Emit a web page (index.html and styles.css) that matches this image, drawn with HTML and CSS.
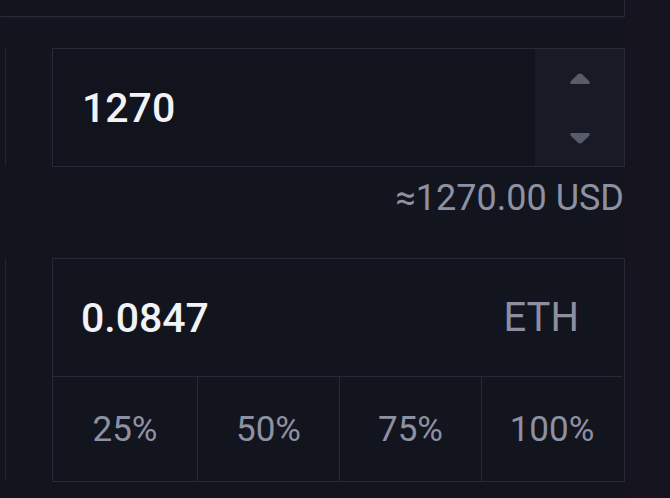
FILE: index.html
```html
<!DOCTYPE html>
<html>
<head>
<meta charset="utf-8">
<link rel="stylesheet" href="styles.css">
</head>
<body>
<div class="page">
  <div class="main">
    <div class="top-box"></div>
    <div class="rows">
      <div class="row">
        <div class="side-box side-1"></div>
        <div class="field price">
          <div class="value">1270</div>
          <div class="stepper">
            <svg class="arrow" width="20" height="12" viewBox="0 0 20 12"><path d="M8 1.2 Q10 -0.4 12 1.2 L19.5 8.5 L19.5 11 L0.5 11 L0.5 8.5 Z" fill="#585b69"/></svg>
            <svg class="arrow" width="20" height="12" viewBox="0 0 20 12"><path d="M0.5 1 L19.5 1 L19.5 3.5 L12 10.8 Q10 12.4 8 10.8 L0.5 3.5 Z" fill="#585b69"/></svg>
          </div>
        </div>
      </div>
      <div class="approx-row">
        <div class="approx">≈1270.00 USD</div>
      </div>
      <div class="row">
        <div class="side-box side-2"></div>
        <div class="field amount">
          <div class="amount-top">
            <div class="value">0.0847</div>
            <div class="unit">ETH</div>
          </div>
          <div class="pcts">
            <div class="pct">25%</div>
            <div class="pct">50%</div>
            <div class="pct">75%</div>
            <div class="pct">100%</div>
          </div>
        </div>
      </div>
    </div>
  </div>
  <div class="strip"></div>
</div>
</body>
</html>
```

FILE: styles.css
```css
html, body {
  margin: 0;
  padding: 0;
  background: #13151e;
  width: 670px;
  height: 498px;
  overflow: hidden;
  font-family: Roboto, "Noto Sans", sans-serif;
}
.page {
  display: flex;
  width: 670px;
  height: 498px;
}
.main {
  width: 625px;
  display: flex;
  flex-direction: column;
}
.top-box {
  height: 16px;
  border-right: 1px solid #272a36;
  border-bottom: 1px solid #272a36;
  box-shadow: 0 3px 2px -1px #171a23;
}
.rows {
  display: flex;
  flex-direction: column;
  padding-top: 31px;
}
.row {
  display: flex;
  gap: 46px;
}
.side-box {
  width: 5px;
  border-right: 1px solid #232632;
  flex: none;
}
.side-1 { height: 118px; }
.side-2 { height: 222px; }
.field {
  flex: 1;
  border: 1px solid #262a36;
  box-sizing: border-box;
}
.price {
  height: 119px;
  display: flex;
}
.value {
  font-size: 41px;
  font-weight: 500;
  color: #f2f3f7;
}
.price .value {
  flex: 1;
  display: flex;
  align-items: center;
  padding-left: 29px;
  background: #12141d;
}
.stepper {
  width: 89px;
  background: #181a25;
  display: flex;
  flex-direction: column;
  align-items: center;
  justify-content: space-between;
  padding: 24px 0 22px;
  box-sizing: border-box;
}
.arrow { display: block; }
.approx-row {
  display: flex;
  justify-content: flex-end;
  height: 91px;
}
.approx {
  font-size: 36px;
  color: #8d91a4;
  padding-right: 1px;
  line-height: 1;
  padding-top: 13px;
}
.amount {
  height: 224px;
  display: flex;
  flex-direction: column;
}
.amount-top {
  height: 117px;
  display: flex;
  align-items: center;
  justify-content: space-between;
  padding: 0 45px 0 28px;
}
.unit {
  font-size: 40px;
  color: #8b8fa1;
}
.pcts {
  flex: 1;
  display: grid;
  grid-template-columns: 144px 142px 142px 1fr;
  border-top: 1px solid #272a36;
  margin: 0 2px 0 0;
}
.pct {
  display: flex;
  align-items: center;
  justify-content: center;
  font-size: 35px;
  color: #8d91a3;
  border-left: 1px solid #272a36;
}
.pct:first-child { border-left: none; }
.strip {
  flex: 1;
  background: linear-gradient(to right, #13151e 0, #15141f 3px, #16151f 27px, #141520 30px, #141520 100%);
}
```
